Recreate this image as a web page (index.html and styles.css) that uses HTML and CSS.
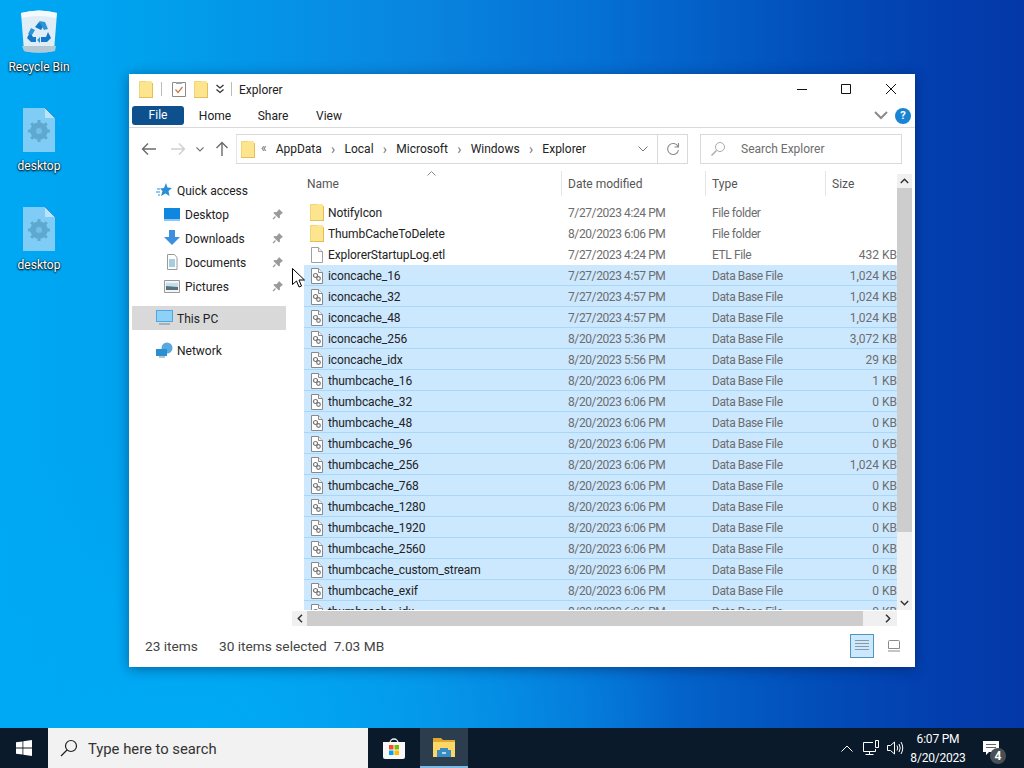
FILE: index.html
```html
<!doctype html>
<html lang="en">
  <head>
    <meta charset="UTF-8" />
    <title>Explorer</title>
    <link rel="stylesheet" href="styles.css">
  </head>
  <body>
    <svg class="defs" width="0" height="0">
      <symbol id="folder" viewBox="0 0 14 17">
        <path d="M0 1q0-1 1-1h11q1 0 1 1v16H0z" fill="#fde58f"/>
        <path d="M13 2h1v15h-1zM0 16h14v1H0z" fill="#e3bf5a"/>
        <path d="M0 1q0-1 1-1h6v1H1v15H0z" fill="#f2d676"/>
      </symbol>
      <symbol id="file" viewBox="0 0 16 16">
        <path d="M2.500 .5h7l4 4v11h-11z" fill="#fff" stroke="#a0a0a0"/>
        <path d="M9.500 .5v4h4" fill="#f2f2f2" stroke="#a0a0a0"/>
      </symbol>
      <symbol id="dbfile" viewBox="0 0 16 16">
        <path d="M2.500 .5h7l4 4v11h-11z" fill="#fff" stroke="#8a8a8a"/>
        <path d="M9.500 .5v4h4" fill="#f2f2f2" stroke="#8a8a8a"/>
        <circle cx="6.500" cy="7.500" r="2" fill="#fff" stroke="#777" stroke-width="1.200"/>
        <circle cx="9.500" cy="10.500" r="1.800" fill="#fff" stroke="#777" stroke-width="1.200"/>
      </symbol>
      <symbol id="pin" viewBox="0 0 12 12">
        <path d="M7 1l4 4-1.200.6-2 2 .2 2L7 10.600 1.400 5l1-1 2 .2 2-2z" fill="#9a9a9a"/>
        <path d="M3.500 8.500L1 11" stroke="#9a9a9a" stroke-width="1.200"/>
      </symbol>
      <symbol id="cogfile" viewBox="0 0 32 44">
        <path d="M0 0h22l10 10v34H0z" fill="#7fcdf6"/>
        <path d="M22 0l10 10H22z" fill="#b9e4fa"/>
        <path d="M22 0l10 10" stroke="#3d8fd0" fill="none"/>
        <circle cx="16" cy="23" r="6.500" fill="none" stroke="#5fa8cf" stroke-width="4.500"/>
        <path d="M16 12v22M5 23h22M8.200 15.200l15.600 15.600M23.800 15.200L8.200 30.800" stroke="#5fa8cf" stroke-width="3"/>
        <circle cx="16" cy="23" r="3" fill="#72c0ea"/>
      </symbol>
    </svg>

    <main class="desktop">
      <div class="desk-icons">
        <div class="desk-icon bin-icon">
          <svg width="38" height="44" viewBox="0 0 38 44">
            <path d="M1 3q18-5 36 0l-3 38q-15 3-30 0z" fill="#dfeef6"/>
            <path d="M1 3q18-5 36 0l-1 5q-17-4-34 0z" fill="#f4f9fc"/>
            <path d="M2 36h34l-1 5q-16 3-31 0z" fill="#b4c8d4"/>
            <path d="M15 17l4-5 5 3-3 5zM10 22l-3 6 4 4h5v-5h-3zM28 22l3 6-4 4h-6v-5h5z" fill="#1578c6"/>
            <path d="M19 11l6 1 3 7-4 1-3-5zM8 24l3-6 4 2-3 5zM20 33l-3-3 3-3z" fill="#2a95dc"/>
          </svg>
          <span>Recycle Bin</span>
        </div>
        <div class="desk-icon">
          <svg width="32" height="44"><use href="#cogfile"/></svg>
          <span>desktop</span>
        </div>
        <div class="desk-icon">
          <svg width="32" height="44"><use href="#cogfile"/></svg>
          <span>desktop</span>
        </div>
      </div>

      <section class="window">
        <header class="titlebar">
          <svg width="14" height="17"><use href="#folder"/></svg>
          <span class="qa-sep"></span>
          <svg class="qa-props" width="14" height="16" viewBox="0 0 14 16">
            <path d="M.5 1.500h13v14H.5z" fill="#fff" stroke="#8a8a8a"/>
            <path d="M4 1h6v2H4z" fill="#a0a0a0"/>
            <path d="M3.500 8.500l2.500 3 4.500-5.500" fill="none" stroke="#c77b4a" stroke-width="1.200"/>
          </svg>
          <svg width="14" height="17"><use href="#folder"/></svg>
          <svg class="qa-more" width="10" height="10" viewBox="0 0 10 10">
            <path d="M1.500 1l3.500 3 3.500-3M1.500 5.500l3.500 3 3.500-3" fill="none" stroke="#333" stroke-width="1.300"/>
          </svg>
          <span class="qa-sep"></span>
          <span class="title-text">Explorer</span>
          <div class="win-btns">
            <svg width="10" height="10" viewBox="0 0 10 10"><path d="M0 5.500h10" stroke="#111"/></svg>
            <svg width="10" height="10" viewBox="0 0 10 10"><path d="M.5.5h9v9h-9z" fill="none" stroke="#111"/></svg>
            <svg width="10" height="10" viewBox="0 0 10 10"><path d="M0 0l10 10M10 0L0 10" stroke="#111"/></svg>
          </div>
        </header>

        <nav class="ribbon">
          <span class="tab tab-file">File</span>
          <span class="tab">Home</span>
          <span class="tab">Share</span>
          <span class="tab tab-view">View</span>
          <svg class="ribbon-chev" width="14" height="9" viewBox="0 0 14 9"><path d="M1 1l6 6 6-6" fill="none" stroke="#8a8a8a" stroke-width="2"/></svg>
          <span class="help">?</span>
        </nav>

        <div class="addressrow">
          <svg class="nav-arrow" width="16" height="14" viewBox="0 0 16 14"><path d="M15 7H2M7 1.500L1.500 7 7 12.500" fill="none" stroke="#6b6b6b" stroke-width="1.400"/></svg>
          <svg class="nav-arrow" width="16" height="14" viewBox="0 0 16 14"><path d="M1 7h13M9 1.500L14.500 7 9 12.500" fill="none" stroke="#cfcfcf" stroke-width="1.400"/></svg>
          <svg class="nav-drop" width="8" height="5" viewBox="0 0 8 5"><path d="M.5.500L4 4 7.500.500" fill="none" stroke="#777" stroke-width="1.200"/></svg>
          <svg class="nav-up" width="14" height="16" viewBox="0 0 14 16"><path d="M7 15V2M1.500 7L7 1.500 12.500 7" fill="none" stroke="#6b6b6b" stroke-width="1.400"/></svg>
          <div class="addressbox">
            <svg width="14" height="17"><use href="#folder"/></svg>
            <span class="crumb-back">&laquo;</span>
            <span>AppData</span><i class="sep">&rsaquo;</i>
            <span>Local</span><i class="sep">&rsaquo;</i>
            <span>Microsoft</span><i class="sep">&rsaquo;</i>
            <span>Windows</span><i class="sep">&rsaquo;</i>
            <span>Explorer</span>
            <svg class="addr-drop" width="10" height="6" viewBox="0 0 10 6"><path d="M.5.500L5 5 9.500.500" fill="none" stroke="#777"/></svg>
            <span class="refresh">
              <svg width="14" height="14" viewBox="0 0 14 14"><path d="M12 4.500A5.500 5.500 0 1 0 12.500 8M12.500 1v4h-4" fill="none" stroke="#8a8a8a" stroke-width="1.100"/></svg>
            </span>
          </div>
          <div class="searchbox">
            <svg width="16" height="16" viewBox="0 0 16 16"><circle cx="10" cy="6" r="4.500" fill="none" stroke="#aaa"/><path d="M6.500 9.500L1.500 14.500" stroke="#aaa" stroke-width="1.400"/></svg>
            <span>Search Explorer</span>
          </div>
        </div>

        <div class="content">
          <aside class="navpane">
            <div class="nav-item top">
              <svg width="16" height="16" viewBox="0 0 16 16"><path d="M10 1l1.500 4.500L16 6l-3.500 3 1 5-4-2.500L5 14l1.500-5L4 6.500 8 6z" fill="#2a8fd8"/><path d="M0 10h4M1 7h3M2 13h2" stroke="#2a8fd8"/></svg>
              <span>Quick access</span>
            </div>
            <div class="nav-item sub">
              <svg width="16" height="13" viewBox="0 0 16 13"><path d="M0 0h16v13H0z" fill="#0f87e0"/><path d="M0 11h16v2H0z" fill="#8cc8f0"/></svg>
              <span>Desktop</span><svg class="pin" width="12" height="12"><use href="#pin"/></svg>
            </div>
            <div class="nav-item sub">
              <svg width="16" height="16" viewBox="0 0 16 16"><path d="M5 0h6v7h5l-8 8-8-8h5z" fill="#3d8fe0"/></svg>
              <span>Downloads</span><svg class="pin" width="12" height="12"><use href="#pin"/></svg>
            </div>
            <div class="nav-item sub">
              <svg width="16" height="16" viewBox="0 0 16 16"><path d="M3.500.500h7l2.500 3v12h-9.500z" fill="#fff" stroke="#9a9a9a"/><path d="M5 6h6M5 8h6M5 10h6M5 12h6" stroke="#4a9ec0"/></svg>
              <span>Documents</span><svg class="pin" width="12" height="12"><use href="#pin"/></svg>
            </div>
            <div class="nav-item sub">
              <svg width="16" height="13" viewBox="0 0 16 13"><path d="M.5.500h15v12H.500z" fill="#f4f4f4" stroke="#9a9a9a"/><path d="M2 3h12v4l-12-1z" fill="#bfe0f0"/><path d="M2 6l12 1v3H2z" fill="#5a7078"/></svg>
              <span>Pictures</span><svg class="pin" width="12" height="12"><use href="#pin"/></svg>
            </div>
            <div class="nav-item top thispc">
              <svg width="17" height="16" viewBox="0 0 17 16"><path d="M0 0h17v12H0z" fill="#4aa8e8"/><path d="M1 1h15v10H1z" fill="#8fd0f6"/><path d="M3 14h11" stroke="#6b8ca0"/></svg>
              <span>This PC</span>
            </div>
            <div class="nav-item top network">
              <svg width="17" height="16" viewBox="0 0 17 16"><circle cx="11" cy="6" r="5.500" fill="#5aa8e0"/><path d="M0 7h11v7H0z" fill="#2a8fd0"/><path d="M3 15h6" stroke="#6b8ca0"/></svg>
              <span>Network</span>
            </div>
          </aside>

          <div class="listpane">
            <div class="listmain">
              <div class="listhead">
                <svg class="sortcaret" width="9" height="5" viewBox="0 0 9 5"><path d="M.5 4.500l4-4 4 4" fill="none" stroke="#888"/></svg>
                <span class="col-name">Name</span>
                <span class="col">Date modified</span>
                <span class="col">Type</span>
                <span class="col">Size</span>
              </div>
              <div class="rows">
                <div class="row"><svg class="row-folder" width="14" height="17"><use href="#folder"/></svg><b>NotifyIcon</b><span>7/27/2023 4:24 PM</span><span>File folder</span><span class="size"></span></div>
                <div class="row"><svg class="row-folder" width="14" height="17"><use href="#folder"/></svg><b>ThumbCacheToDelete</b><span>8/20/2023 6:06 PM</span><span>File folder</span><span class="size"></span></div>
                <div class="row"><svg width="16" height="16"><use href="#file"/></svg><b>ExplorerStartupLog.etl</b><span>7/27/2023 4:24 PM</span><span>ETL File</span><span class="size">432 KB</span></div>
                <div class="row sel"><svg width="16" height="16"><use href="#dbfile"/></svg><b>iconcache_16</b><span>7/27/2023 4:57 PM</span><span>Data Base File</span><span class="size">1,024 KB</span></div>
                <div class="row sel"><svg width="16" height="16"><use href="#dbfile"/></svg><b>iconcache_32</b><span>7/27/2023 4:57 PM</span><span>Data Base File</span><span class="size">1,024 KB</span></div>
                <div class="row sel"><svg width="16" height="16"><use href="#dbfile"/></svg><b>iconcache_48</b><span>7/27/2023 4:57 PM</span><span>Data Base File</span><span class="size">1,024 KB</span></div>
                <div class="row sel"><svg width="16" height="16"><use href="#dbfile"/></svg><b>iconcache_256</b><span>8/20/2023 5:36 PM</span><span>Data Base File</span><span class="size">3,072 KB</span></div>
                <div class="row sel"><svg width="16" height="16"><use href="#dbfile"/></svg><b>iconcache_idx</b><span>8/20/2023 5:56 PM</span><span>Data Base File</span><span class="size">29 KB</span></div>
                <div class="row sel"><svg width="16" height="16"><use href="#dbfile"/></svg><b>thumbcache_16</b><span>8/20/2023 6:06 PM</span><span>Data Base File</span><span class="size">1 KB</span></div>
                <div class="row sel"><svg width="16" height="16"><use href="#dbfile"/></svg><b>thumbcache_32</b><span>8/20/2023 6:06 PM</span><span>Data Base File</span><span class="size">0 KB</span></div>
                <div class="row sel"><svg width="16" height="16"><use href="#dbfile"/></svg><b>thumbcache_48</b><span>8/20/2023 6:06 PM</span><span>Data Base File</span><span class="size">0 KB</span></div>
                <div class="row sel"><svg width="16" height="16"><use href="#dbfile"/></svg><b>thumbcache_96</b><span>8/20/2023 6:06 PM</span><span>Data Base File</span><span class="size">0 KB</span></div>
                <div class="row sel"><svg width="16" height="16"><use href="#dbfile"/></svg><b>thumbcache_256</b><span>8/20/2023 6:06 PM</span><span>Data Base File</span><span class="size">1,024 KB</span></div>
                <div class="row sel"><svg width="16" height="16"><use href="#dbfile"/></svg><b>thumbcache_768</b><span>8/20/2023 6:06 PM</span><span>Data Base File</span><span class="size">0 KB</span></div>
                <div class="row sel"><svg width="16" height="16"><use href="#dbfile"/></svg><b>thumbcache_1280</b><span>8/20/2023 6:06 PM</span><span>Data Base File</span><span class="size">0 KB</span></div>
                <div class="row sel"><svg width="16" height="16"><use href="#dbfile"/></svg><b>thumbcache_1920</b><span>8/20/2023 6:06 PM</span><span>Data Base File</span><span class="size">0 KB</span></div>
                <div class="row sel"><svg width="16" height="16"><use href="#dbfile"/></svg><b>thumbcache_2560</b><span>8/20/2023 6:06 PM</span><span>Data Base File</span><span class="size">0 KB</span></div>
                <div class="row sel"><svg width="16" height="16"><use href="#dbfile"/></svg><b>thumbcache_custom_stream</b><span>8/20/2023 6:06 PM</span><span>Data Base File</span><span class="size">0 KB</span></div>
                <div class="row sel"><svg width="16" height="16"><use href="#dbfile"/></svg><b>thumbcache_exif</b><span>8/20/2023 6:06 PM</span><span>Data Base File</span><span class="size">0 KB</span></div>
                <div class="row sel"><svg width="16" height="16"><use href="#dbfile"/></svg><b>thumbcache_idx</b><span>8/20/2023 6:06 PM</span><span>Data Base File</span><span class="size">0 KB</span></div>
              </div>
            </div>
            <div class="vscroll">
              <span class="sb-btn"><svg width="9" height="6" viewBox="0 0 9 6"><path d="M.8 5l3.700-3.700L8.200 5" fill="none" stroke="#333" stroke-width="1.500"/></svg></span>
              <span class="vthumb"></span>
              <span class="sb-btn"><svg width="9" height="6" viewBox="0 0 9 6"><path d="M.8 1l3.700 3.700L8.200 1" fill="none" stroke="#333" stroke-width="1.500"/></svg></span>
            </div>
            <div class="hscroll">
              <span class="sb-btn"><svg width="6" height="9" viewBox="0 0 6 9"><path d="M5 .8L1.300 4.500 5 8.200" fill="none" stroke="#333" stroke-width="1.500"/></svg></span>
              <span class="hthumb"></span>
              <span class="sb-btn right"><svg width="6" height="9" viewBox="0 0 6 9"><path d="M1 .8l3.700 3.700L1 8.200" fill="none" stroke="#333" stroke-width="1.500"/></svg></span>
            </div>
          </div>
        </div>

        <footer class="statusbar">
          <span class="st-count">23 items</span>
          <span>30 items selected&nbsp; 7.03 MB</span>
          <span class="view-btn active">
            <svg width="14" height="11" viewBox="0 0 14 11"><path d="M0 .5h14M0 3.500h14M0 6.500h14M0 9.500h14" stroke="#8a9aa5"/></svg>
          </span>
          <span class="view-btn">
            <svg width="12" height="12" viewBox="0 0 12 12"><path d="M1.500 .5h9a1 1 0 0 1 1 1v7h-11v-7a1 1 0 0 1 1-1zM0 11h12" fill="none" stroke="#8a8a8a"/></svg>
          </span>
        </footer>
      </section>

      <svg class="cursor" width="13" height="20" viewBox="0 0 13 20">
        <path d="M.5.500v16l4-3.500 2.500 6 2.500-1-2.500-6h5.500z" fill="#fff" stroke="#000"/>
      </svg>
    </main>

    <div class="taskbar">
      <span class="start">
        <svg width="16" height="16" viewBox="0 0 16 16"><path d="M0 2.300l6.500-.9v6.200H0zM7.300 1.300L16 0v7.600H7.300zM0 8.400h6.500v6.200L0 13.700zM7.300 8.400H16V16l-8.700-1.300z" fill="#fff"/></svg>
      </span>
      <div class="tb-search">
        <svg width="18" height="18" viewBox="0 0 18 18"><circle cx="11" cy="7" r="5.500" fill="none" stroke="#222" stroke-width="1.200"/><path d="M7 11l-6 6" stroke="#222" stroke-width="1.300"/></svg>
        <span>Type here to search</span>
      </div>
      <span class="tb-app">
        <svg width="24" height="24" viewBox="0 0 24 24">
          <path d="M8 7a4 4 0 0 1 8 0" fill="none" stroke="#eee" stroke-width="1.300"/>
          <path d="M1 6h22v15a2 2 0 0 1-2 2H3a2 2 0 0 1-2-2z" fill="#f7f7f7"/>
          <path d="M7 9h4.500v4.500H7z" fill="#f25022"/><path d="M12.500 9H17v4.500h-4.500z" fill="#7fba00"/>
          <path d="M7 14.500h4.500V19H7z" fill="#00a4ef"/><path d="M12.500 14.500H17V19h-4.500z" fill="#ffb900"/>
        </svg>
      </span>
      <span class="tb-app active">
        <svg width="22" height="20" viewBox="0 0 22 20">
          <path d="M0 1h8l2 2h12v17H0z" fill="#e0a82e"/>
          <path d="M0 5h22v15H0z" fill="#fcd667"/>
          <path d="M7 11h8v2h3v7H4v-7h3z" fill="#3a8cc4"/>
          <path d="M9 15h4v2H9z" fill="#b7d9ee"/>
        </svg>
      </span>
      <div class="tray">
        <svg width="12" height="7" viewBox="0 0 12 7"><path d="M.5 6.500L6 1l5.500 5.500" fill="none" stroke="#fff"/></svg>
        <svg width="17" height="16" viewBox="0 0 17 16"><path d="M10 2.500H.5v9h12V9M2.500 14.500h8M6.500 11.500v3" fill="none" stroke="#fff"/><path d="M12.500.5h3v7h-3z" fill="none" stroke="#fff"/></svg>
        <svg width="17" height="14" viewBox="0 0 17 14"><path d="M.5 4.500h3l4-3.500v12l-4-3.500h-3zM10 4.500q1.500 2.500 0 5M12 3q2.500 4 0 8M14 1q3.500 6 0 12" fill="none" stroke="#fff"/></svg>
        <div class="clock"><span>6:07 PM</span><span>8/20/2023</span></div>
        <span class="notif">
          <svg width="16" height="14" viewBox="0 0 16 14"><path d="M0 0h16v11H6l-3 3v-3H0z" fill="#fff"/><path d="M3 3.500h10M3 6.500h10" stroke="#666"/></svg>
          <i class="badge">4</i>
        </span>
      </div>
    </div>
  </body>
</html>
```

FILE: styles.css
```css
* {
  margin: 0;
  padding: 0;
  box-sizing: border-box;
}

body {
  width: 1024px;
  height: 768px;
  overflow: hidden;
  display: flex;
  flex-direction: column;
  font-family: Roboto, "Noto Sans", sans-serif;
  font-size: 12px;
  color: #222;
}

.defs {
  position: absolute;
}

svg {
  display: block;
  flex: none;
}

/* Escritorio */
.desktop {
  position: relative;
  height: 728px;
  overflow: hidden;
  background:
    radial-gradient(ellipse 480px 300px at 200px 728px, #00aaf5 0%, rgba(0, 170, 245, 0) 100%),
    linear-gradient(90deg, #00a8f4 0%, #00a2ee 130px, #0987e0 400px, #0570d4 600px, #0250bb 800px, #0340b0 920px, #0438a8 100%);
}

.desk-icons {
  position: absolute;
  left: 0;
  top: 0;
  width: 78px;
  display: flex;
  flex-direction: column;
  align-items: center;
}

.desk-icon {
  height: 99px;
  padding-top: 8px;
  display: flex;
  flex-direction: column;
  align-items: center;
  color: #fff;
  text-shadow: 0 1px 2px #000, 0 0 2px #000;
}

.desk-icon span {
  margin-top: 7px;
}

.bin-icon {
  height: 100px;
  padding-top: 10px;
}

.bin-icon span {
  margin-top: 6px;
}

/* Ventana */
.window {
  position: absolute;
  left: 129px;
  top: 74px;
  width: 786px;
  height: 593px;
  display: flex;
  flex-direction: column;
  background: #fff;
  box-shadow: 0 2px 12px rgba(0, 20, 60, 0.45);
}

.titlebar {
  height: 30px;
  display: flex;
  align-items: center;
  padding-left: 10px;
  flex: none;
}

.qa-sep {
  width: 1px;
  height: 14px;
  background: #bbb;
  margin: 0 8px;
}

.qa-props {
  margin: 0 8px 0 2px;
}

.qa-more {
  margin: 0 -2px 0 7px;
}

.title-text {
  margin-left: -1px;
  padding-top: 1px;
}

.win-btns {
  margin-left: auto;
  display: flex;
  gap: 34px;
  padding-right: 19px;
}

.win-btns svg:nth-child(2) {
  margin-right: 1px;
}

.ribbon {
  height: 24px;
  display: flex;
  align-items: center;
  padding-left: 3px;
  border-bottom: 1px solid #dadada;
  flex: none;
}

.tab {
  width: 58px;
  padding-top: 1px;
  text-align: center;
}

.tab-file {
  width: 52px;
  height: 19px;
  line-height: 19px;
  margin-right: 2px;
  padding-top: 0;
  background: #0e4f8e;
  color: #fff;
  border-radius: 3px;
}

.tab-view {
  margin-left: -2px;
}

.ribbon-chev {
  margin-left: auto;
  margin-right: 7px;
}

.help {
  width: 16px;
  height: 16px;
  margin-right: 4px;
  padding-top: 0;
  border-radius: 50%;
  background: #1a84d4;
  color: #fff;
  font-weight: 700;
  font-size: 11px;
  line-height: 16px;
  text-align: center;
}

.addressrow {
  height: 42px;
  display: flex;
  align-items: center;
  padding-left: 12px;
  flex: none;
}

.nav-arrow {
  margin-right: 13px;
}

.nav-drop {
  margin: 0 9px 0 -3px;
}

.nav-up {
  margin: 0 7px 0 2px;
}

.addressbox {
  width: 452px;
  height: 30px;
  display: flex;
  align-items: center;
  padding-left: 4px;
  border: 1px solid #d9d9d9;
  border-left-color: #e4e4e4;
}

.crumb-back {
  margin: 0 9px 2px 6px;
  color: #666;
}

.sep {
  margin: 0 9.250px;
  font-style: normal;
  color: #777;
  font-size: 14px;
  line-height: 14px;
}

.addr-drop {
  margin-left: auto;
  margin-right: 9px;
}

.refresh {
  width: 30px;
  height: 28px;
  display: flex;
  align-items: center;
  justify-content: center;
  border-left: 1px solid #d9d9d9;
}

.searchbox {
  width: 202px;
  height: 30px;
  margin-left: 12px;
  display: flex;
  align-items: center;
  gap: 15px;
  padding: 0 0 1px 9px;
  border: 1px solid #d9d9d9;
  color: #6d6d6d;
}

.content {
  flex: 1;
  min-height: 0;
  display: flex;
}

/* Panel de navegación */
.navpane {
  width: 163px;
  padding: 8px 0 0 3px;
  flex: none;
}

.nav-item {
  width: 154px;
  height: 24px;
  display: flex;
  align-items: center;
  gap: 5px;
  padding-left: 24px;
}

.nav-item span {
  padding-top: 2px;
}

.nav-item.sub {
  padding-left: 32px;
}

.pin {
  margin-left: auto;
  margin-right: 2px;
}

.thispc {
  margin-top: 8px;
  background: #d9d9d9;
  gap: 4px;
}

.network {
  margin-top: 8px;
  gap: 4px;
}

/* Lista de archivos */
.listpane {
  width: 620px;
  display: grid;
  grid-template-columns: 605px 15px;
  grid-template-rows: 440px 16px;
}

.listmain {
  padding-left: 12px;
  overflow: hidden;
  position: relative;
}

.listhead {
  height: 32px;
  padding-top: 1px;
  display: grid;
  grid-template-columns: 258px 144px 120px 71px;
  color: #555;
}

.col-name,
.col {
  height: 25px;
  line-height: 27px;
  padding-left: 6px;
  border-right: 1px solid #e5e5e5;
}

.col-name {
  padding-left: 3px;
}

.col:last-child {
  border: 0;
}

.sortcaret {
  position: absolute;
  left: 135px;
  top: 1px;
}

.row {
  height: 21px;
  display: grid;
  grid-template-columns: 24px 240px 144px 100px 85px;
  align-items: center;
  color: #6d6d6d;
  letter-spacing: -0.4px;
}

.row svg {
  margin-left: 5px;
}

.row .row-folder {
  margin-left: 6px;
}

.row b {
  font-weight: 400;
  color: #222;
  letter-spacing: -0.1px;
}

.row .size {
  text-align: right;
  grid-column: 5;
  letter-spacing: 0;
}

.row.sel {
  background: #cce8ff;
  box-shadow: inset 0 -1px 0 #a9d7f8;
}

.vscroll {
  background: #f0f0f0;
  display: flex;
  flex-direction: column;
  margin-top: 4px;
}

.sb-btn {
  width: 15px;
  height: 14px;
  display: flex;
  align-items: center;
  justify-content: center;
  flex: none;
}

.vthumb {
  height: 344px;
  background: #cdcdcd;
  margin-bottom: auto;
}

.hscroll {
  grid-column: 1;
  display: flex;
  height: 16px;
  background: #f0f0f0;
  border-top: 1px solid #fff;
}

.hthumb {
  width: 556px;
  background: #cdcdcd;
}

.hscroll .right {
  margin-left: 17px;
}

.statusbar {
  height: 41px;
  flex: none;
  display: flex;
  align-items: center;
  padding: 0 9px 2px 16px;
  font-size: 13.700px;
  color: #444;
}

.st-count {
  width: 74px;
}

.view-btn {
  width: 24px;
  height: 24px;
  display: flex;
  align-items: center;
  justify-content: center;
  margin-left: auto;
}

.view-btn.active {
  background: #cce8ff;
  border: 1px solid #4f96b8;
  margin-right: 8px;
}

.view-btn + .view-btn {
  margin-left: 0;
}

.cursor {
  position: absolute;
  left: 292px;
  top: 268px;
}

/* Barra de tareas */
.taskbar {
  height: 40px;
  display: flex;
  align-items: stretch;
  background: #0a1a2b;
  color: #fff;
}

.start {
  width: 48px;
  display: flex;
  align-items: center;
  justify-content: center;
}

.tb-search {
  width: 320px;
  display: flex;
  align-items: center;
  gap: 10px;
  padding-left: 12px;
  background: #f2f2f2;
  color: #333;
  font-size: 14.800px;
}

.tb-search span {
  padding-top: 2px;
}

.tb-app {
  width: 48px;
  margin-left: 2px;
  display: flex;
  align-items: center;
  justify-content: center;
}

.tb-app.active {
  background: #2c3e4e;
  border-bottom: 2px solid #7db9e8;
}

.tray {
  margin-left: auto;
  display: flex;
  align-items: center;
}

.tray > svg:nth-child(1) {
  margin-right: 10px;
}

.tray > svg:nth-child(2) {
  margin-right: 7px;
}

.clock {
  width: 74px;
  margin-left: -3px;
  display: flex;
  flex-direction: column;
  align-items: center;
  gap: 3px;
  line-height: 16px;
  letter-spacing: -0.2px;
}

.notif {
  position: relative;
  width: 49px;
  height: 40px;
  display: flex;
  align-items: center;
  padding-left: 8px;
}

.badge {
  position: absolute;
  left: 15px;
  top: 20px;
  width: 16px;
  height: 16px;
  border-radius: 50%;
  background: #4a4f55;
  font-style: normal;
  font-weight: 700;
  font-size: 12px;
  line-height: 16px;
  text-align: center;
}
```
